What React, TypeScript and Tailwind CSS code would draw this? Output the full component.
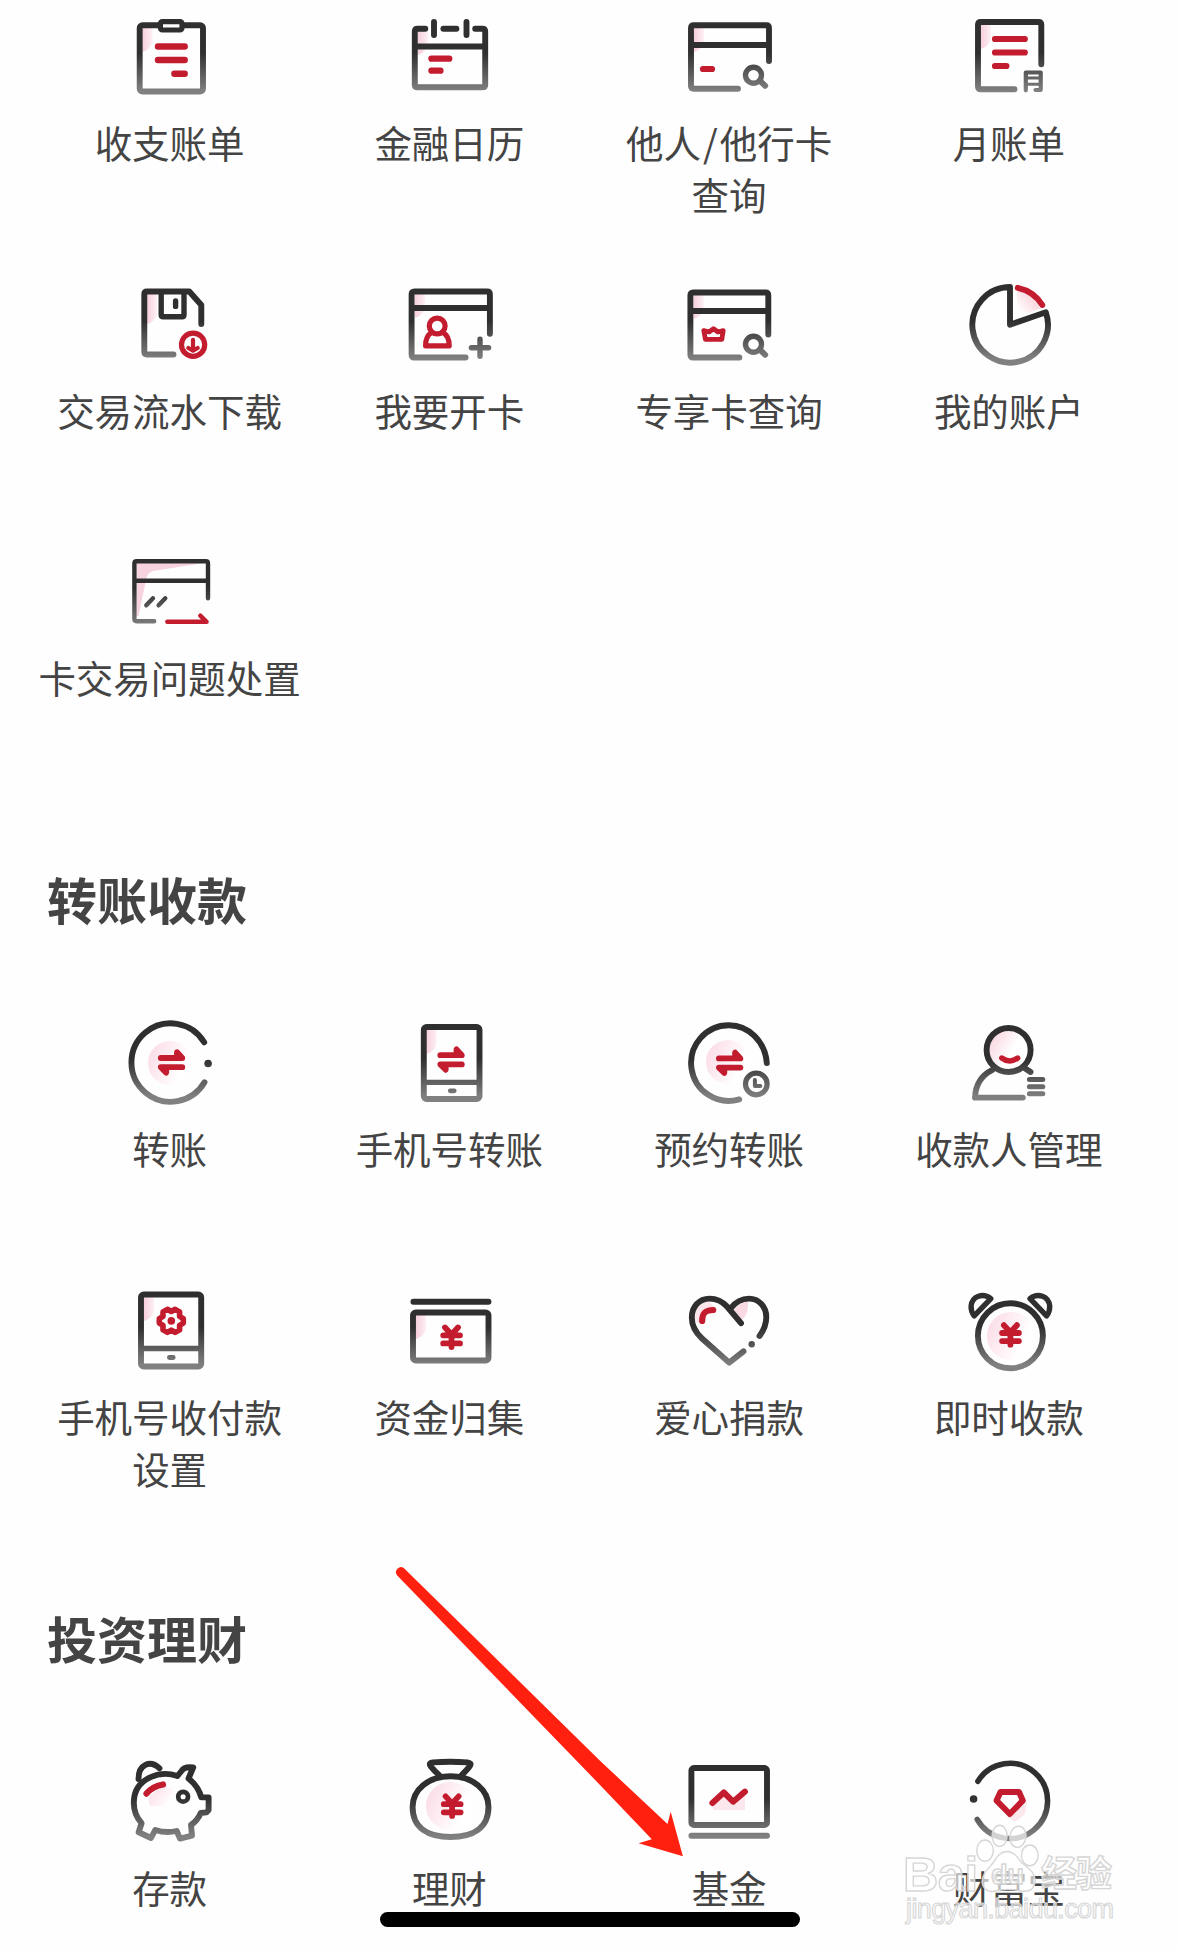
import type { ReactNode } from "react";

const INK = "url(#ink)";
const RED = "#c41c2f";

const Icon = ({ children }: { children: ReactNode }) => (
  <svg
    viewBox="0 0 90 90"
    className="h-[90px] w-[90px] shrink-0 overflow-visible"
    fill="none"
    stroke={INK}
    strokeWidth={5.9}
    strokeLinecap="round"
    strokeLinejoin="round"
  >
    {children}
  </svg>
);

// soft pink shade in the top left corner of the boxed icons
const Blush = ({ x, y, h = 24 }: { x: number; y: number; h?: number }) => (
  <path
    d={`M${x} ${y}h10v${h - 9}q-3 7-10 9z`}
    fill="url(#blush)"
    stroke="none"
  />
);

const Glow = ({ cx, cy, r = 22 }: { cx: number; cy: number; r?: number }) => (
  <circle cx={cx} cy={cy} r={r} fill="url(#glow)" stroke="none" />
);

const Swap = ({ x = 0, y = 0 }: { x?: number; y?: number }) => (
  <g transform={`translate(${x} ${y})`} stroke={RED} fill={RED} strokeWidth={5.8}>
    <path d="M34.8 41H56.3L51 35.2V41" />
    <path d="M56.3 50.2H34.8L40.2 55.6V50.2" />
  </g>
);

const Yen = ({ x = 0, y = 0 }: { x?: number; y?: number }) => (
  <g transform={`translate(${x} ${y})`} stroke={RED} strokeWidth={5.8}>
    <path d="M39 42.5L45.5 49.5L52 42.5M37.2 50.3H54M37.2 58.4H54M45.5 49.5V62" />
  </g>
);

const Magnifier = ({ y = 0 }: { y?: number }) => (
  <g transform={`translate(0 ${y})`}>
    <circle cx="68.5" cy="64.2" r="8" strokeWidth="5.4" />
    <path d="M75 69.8L80.2 74.8" />
  </g>
);

const icons = {
  bill: (
    <Icon>
      <Blush x={16.5} y={17} />
      <rect x="13.7" y="14.3" width="63.3" height="66.2" rx="2.8" />
      <rect x="34.4" y="10.6" width="21.6" height="8.4" rx="2" fill="#fff" strokeWidth="5.2" />
      <path d="M32 35.5H58.7M32 49H58.7M48.4 62.7H58.7" stroke={RED} strokeWidth="6.4" />
    </Icon>
  ),
  calendar: (
    <Icon>
      <Blush x={12} y={20} />
      <path d="M19.3 17.7H11.5Q8.8 17.7 8.8 20.5V74Q8.8 76.3 11.5 76.3H76.5Q79.2 76.3 79.2 74V20.5Q79.2 17.7 76.5 17.7H69.2M37.4 17.7H50.4M28 11V24M60.5 11V24" />
      <path d="M9 35.4H79" strokeWidth="6" />
      <path d="M25.4 47.7H43.3M25.4 59.7H34.5" stroke={RED} strokeWidth="6.2" />
    </Icon>
  ),
  cardSearch: (
    <Icon>
      <Blush x={9} y={17} />
      <path d="M84 50V17Q84 14.3 81.3 14.3H8.8Q6 14.3 6 17V75Q6 77.7 8.8 77.7H53M6 34H84" />
      <path d="M18 58H27" stroke={RED} strokeWidth="6.2" />
      <Magnifier />
    </Icon>
  ),
  monthBill: (
    <Icon>
      <Blush x={16} y={14} />
      <path d="M76.3 53.3V13.8Q76.3 11 73.5 11H15.8Q13 11 13 13.8V75.5Q13 78.3 15.8 78.3H49.5" />
      <path d="M30 28H59.8M30 41.5H59.8M30 55H41.4" stroke={RED} strokeWidth="6.2" />
      <path d="M60.8 79.3V61.5H75.7V79H70.5" strokeWidth="4.2" />
      <path d="M61 67H75M61 73.2H75" strokeWidth="3" />
    </Icon>
  ),
  floppy: (
    <Icon>
      <Blush x={21} y={15} h={30} />
      <path d="M75.3 45V26L63.3 12.5H21Q18.3 12.5 18.3 15.2V72.8Q18.3 75.5 21 75.5H47.5" />
      <path d="M35.2 13V35.8Q35.2 37.8 37.2 37.8H56Q58 37.8 58 35.8V13M49.6 22V27.4" strokeWidth="5.4" />
      <circle cx="67.1" cy="65.7" r="11.6" stroke={RED} strokeWidth="5.2" />
      <path d="M67 60.8V70.5M62.3 69L67 71.6L71.7 69" stroke={RED} strokeWidth="4.2" />
    </Icon>
  ),
  openCard: (
    <Icon>
      <Blush x={9} y={15} />
      <path d="M83.9 54.8V15.3Q83.9 12.5 81.1 12.5H8.4Q5.6 12.5 5.6 15.3V75.7Q5.6 78.5 8.4 78.5H59.6M5.6 29H83.9" />
      <circle cx="31.2" cy="47" r="7.9" stroke={RED} strokeWidth="5.2" />
      <path d="M25.8 53.5C21 56 19.6 61 19.6 66.8H43.2C43.2 61 41.6 56 36.8 53.5" stroke={RED} strokeWidth="5.2" />
      <path d="M65.4 68.8H82.6M74 60.3V77.2" strokeWidth="5.4" />
    </Icon>
  ),
  exclusiveCard: (
    <Icon>
      <Blush x={8.6} y={16} />
      <path d="M83.3 55.5V16.3Q83.3 13.5 80.5 13.5H8.2Q5.4 13.5 5.4 16.3V75.7Q5.4 78.5 8.2 78.5H54.4M5.4 32H83.3" />
      <path d="M18.8 51.6L24 53L28.5 49.8L33 53L38.2 51.6L36.8 60.4H20.4Z" stroke={RED} strokeWidth="4.8" />
      <Magnifier y={1} />
    </Icon>
  ),
  pie: (
    <Icon>
      <path d="M52 38V12Q68 14 75 29.5Z" fill="url(#wedge)" stroke="none" />
      <path d="M45 45.7V8A37.8 37.8 0 1 0 80.8 33.3Z" />
      <path d="M52.8 8.8Q69 12.3 77.3 26" stroke={RED} />
    </Icon>
  ),
  cardIssue: (
    <Icon>
      <path d="M10.5 17H78L27 25Q21 26.5 20 34L12.5 70H10.5Z" fill="#f6d3de" stroke="none" />
      <g strokeWidth="4.4">
        <path d="M82 52.3V17.4Q82 15.2 79.8 15.2H10.6Q8.4 15.2 8.4 17.4V73Q8.4 75.2 10.6 75.2H28.2M8.4 34.8H82M27 52.3L20.3 59.3M39.3 52.3L32.6 59.3" />
        <path d="M41.3 75.8H80.6L74.3 69.7" stroke={RED} />
      </g>
    </Icon>
  ),
  transfer: (
    <Icon>
      <Glow cx={44} cy={46} />
      <path d="M78.2 25.3A39.2 39.2 0 1 0 78.5 65.3" />
      <circle cx="82.1" cy="46.5" r="3.8" fill={INK} stroke="none" />
      <Swap />
    </Icon>
  ),
  phoneTransfer: (
    <Icon>
      <Blush x={20.5} y={13} />
      <rect x="17.8" y="10" width="55.7" height="72" rx="2.8" />
      <path d="M18 65.4H73" strokeWidth="5.4" />
      <path d="M44.3 73.8H48.2" strokeWidth="4.8" />
      <Swap x={-0.5} y={-2.8} />
    </Icon>
  ),
  scheduled: (
    <Icon>
      <Glow cx={43} cy={45} />
      <path d="M81.8 46A38 41 0 0 0 44 8.3A37.6 37.8 0 1 0 54.2 82.4" />
      <Swap x={-0.9} y={0.4} />
      <circle cx="71.3" cy="67" r="10.8" strokeWidth="5.2" />
      <path d="M69.9 63V69H75.3" strokeWidth="4" />
    </Icon>
  ),
  payee: (
    <Icon>
      <circle cx="43.6" cy="33" r="22" fill="url(#face)" />
      <path d="M36.8 41Q44.7 47 52.7 41" stroke={RED} strokeWidth="5.4" />
      <path d="M27.5 52.8C17 58 10.5 67 10 80.6H57.8M59.5 51L65.5 55" />
      <path d="M64.4 62.4H77.8M64.4 69.7H77.8M64.4 76.8H77.8" strokeWidth="5" />
    </Icon>
  ),
  phoneSettings: (
    <Icon>
      <Blush x={18} y={12} />
      <rect x="15" y="9.5" width="60.2" height="72" rx="2.8" />
      <path d="M15.5 63.5H75" strokeWidth="5.4" />
      <path d="M43.4 72.5H47.2" strokeWidth="4.8" />
      <path
        d="M41.4 24.3L45.3 26.5L49.2 24.3L53.6 26.9V31.4L57.3 33.7V38.1L53.6 40.4V44.9L49.2 47.4L45.3 45.1L41.4 47.4L37 44.9V40.4L33.3 38.1V33.7L37 31.4V26.9Z"
        stroke={RED}
        strokeWidth="5.6"
      />
      <circle cx="45.3" cy="35.9" r="3.8" fill={RED} stroke="none" />
    </Icon>
  ),
  collect: (
    <Icon>
      <Blush x={10} y={30} />
      <path d="M7.4 16.8H82.5" />
      <rect x="7" y="27.5" width="75.5" height="48" rx="2.8" />
      <Yen />
    </Icon>
  ),
  heart: (
    <Icon>
      <path d="M49 25Q55 17 63 16.5Q64 28 57 35Z" fill="#f8d9e2" stroke="none" />
      <path d="M10 33Q10 17 24 16.5L29 22Q18 22 17 37L12 38Z" fill="#fbe4ea" stroke="none" />
      <path d="M56 38.2L42 21.5C37 16 31 13.6 24.5 13.6C14 13.6 6.8 22 6.8 32.5C6.8 41 10.5 47.5 17 53.5L44.2 77.6L58.5 66.4" />
      <path d="M46 23C51 16.5 57 13.6 64 13.6C74 13.6 81.3 22 81.3 32C81.3 39 79 45 74.5 51" />
      <circle cx="66.7" cy="59.3" r="3.2" fill={INK} stroke="none" />
      <path d="M17.2 36C17.2 28 20.2 25 28.2 25" stroke={RED} strokeWidth="6.2" />
    </Icon>
  ),
  alarm: (
    <Icon>
      <Glow cx={46} cy={51} r={24} />
      <circle cx="45.4" cy="50.8" r="32.5" />
      <path d="M25.8 13.6C18 7.6 7.2 11 6.1 21Q5.8 26.5 9.2 30.9Z" strokeWidth="5.4" />
      <path d="M65 13.6C72.8 7.6 83.6 11 84.7 21Q85 26.5 81.6 30.9Z" strokeWidth="5.4" />
      <Yen x={-0.1} y={-2.3} />
    </Icon>
  ),
  pig: (
    <Icon>
      <path d="M22 42L37 29L55 38L42 50H24Z" fill="url(#glow)" stroke="none" />
      <path d="M12.5 23C12.5 8.5 24 3.5 33.5 12.3" />
      <path d="M51.4 20C34 14 7.8 22 7.8 47C7.8 55 10.5 61.5 15.6 67.3L12.6 76.3L25 82L29.2 74Q40 77.5 50.7 75L54 82.6L66 79.6L65 69Q71.5 64.5 74.8 57L80.5 56.4L82.6 54V41.4H75.2Q72.5 30.5 62.5 22.5L67.2 11.5Q58 10.5 55.5 15L51.4 20" />
      <circle cx="57.1" cy="40.7" r="4.9" strokeWidth="4.7" />
      <path d="M20.5 37.6Q27 30 37 28.5" stroke={RED} strokeWidth="6.2" />
    </Icon>
  ),
  bag: (
    <Icon>
      <Glow cx={44} cy={50} r={24} />
      <path d="M34 20C30 16 26 12.5 24.2 9.4Q22.8 6.8 27 6.4Q44 5 61.5 6.4Q65.6 6.8 64.2 9.4C62 13 58 16.5 55 20" />
      <path d="M44.6 20.3C67 20.3 82.5 34 82.5 51C82.5 72 67 81 44.6 81C22 81 6.6 72 6.6 51C6.6 34 22 20.3 44.6 20.3Z" />
      <Yen x={0.6} y={-2.1} />
    </Icon>
  ),
  fund: (
    <Icon>
      <path d="M28 50L39 40L48 48L60 39V54H28Z" fill="#fbe7ec" stroke="none" />
      <rect x="6.4" y="12" width="75.6" height="57" rx="2.5" />
      <path d="M6.4 79.7H82" />
      <path d="M27.4 47L38.8 36.5L48.1 45.7L59.9 35.6" stroke={RED} strokeWidth="6" />
    </Icon>
  ),
  treasure: (
    <Icon>
      <path d="M44 62L62 46L60 58L50 66Z" fill="#fbe7ec" stroke="none" />
      <path d="M12.9 25.3A37.6 37.6 0 1 1 12.2 63.3" strokeWidth="5.5" />
      <circle cx="8.6" cy="43" r="3.8" fill={INK} stroke="none" />
      <path d="M35.5 36H54L57.8 44.6L44.8 58L31.6 44.6Z" stroke={RED} strokeWidth="6" />
    </Icon>
  ),
};

type Item = { icon: keyof typeof icons; label: ReactNode };

const accountItems: Item[] = [
  { icon: "bill", label: "收支账单" },
  { icon: "calendar", label: "金融日历" },
  {
    icon: "cardSearch",
    label: (
      <>
        他人<span className="px-[2px]">/</span>他行卡
        <br />
        查询
      </>
    ),
  },
  { icon: "monthBill", label: "月账单" },
  { icon: "floppy", label: "交易流水下载" },
  { icon: "openCard", label: "我要开卡" },
  { icon: "exclusiveCard", label: "专享卡查询" },
  { icon: "pie", label: "我的账户" },
  { icon: "cardIssue", label: "卡交易问题处置" },
];

const transferItems: Item[] = [
  { icon: "transfer", label: "转账" },
  { icon: "phoneTransfer", label: "手机号转账" },
  { icon: "scheduled", label: "预约转账" },
  { icon: "payee", label: "收款人管理" },
  {
    icon: "phoneSettings",
    label: (
      <>
        手机号收付款
        <br />
        设置
      </>
    ),
  },
  { icon: "collect", label: "资金归集" },
  { icon: "heart", label: "爱心捐款" },
  { icon: "alarm", label: "即时收款" },
];

const investItems: Item[] = [
  { icon: "pig", label: "存款" },
  { icon: "bag", label: "理财" },
  { icon: "fund", label: "基金" },
  { icon: "treasure", label: "财富宝" },
];

const ItemGrid = ({ items }: { items: Item[] }) => (
  <div className="grid auto-rows-[267.6px] grid-cols-4 pl-[31px] pr-[29px]">
    {items.map((item) => (
      <div key={item.icon} className="flex flex-col items-center gap-[15px]">
        {icons[item.icon]}
        <span className="whitespace-nowrap pr-[2.5px] text-center text-[37.5px] leading-[52.3px]">
          {item.label}
        </span>
      </div>
    ))}
  </div>
);

const SectionTitle = ({ children }: { children: ReactNode }) => (
  <h2 className="mb-[83px] mt-[48.5px] pl-[47px] text-[50px] font-bold leading-[72px]">
    {children}
  </h2>
);

const Gradients = () => (
  <svg className="absolute h-0 w-0">
    <defs>
      <linearGradient id="ink" gradientUnits="userSpaceOnUse" x1="0" y1="42" x2="0" y2="80">
        <stop offset="0" stopColor="#2f2f2f" />
        <stop offset="1" stopColor="#808080" />
      </linearGradient>
      <linearGradient id="blush">
        <stop offset="0" stopColor="#f7cfdc" />
        <stop offset="1" stopColor="#fdf0f4" />
      </linearGradient>
      <linearGradient id="glow" x1="0" y1="0.2" x2="0.9" y2="0.6">
        <stop offset="0" stopColor="#fbdbe5" />
        <stop offset="0.9" stopColor="#fff" />
      </linearGradient>
      <linearGradient id="wedge" x1="1" y1="0" x2="0.1" y2="0.8">
        <stop offset="0" stopColor="#f6c3cf" />
        <stop offset="1" stopColor="#fff" />
      </linearGradient>
      <linearGradient id="face" x1="0" y1="0.2" x2="0.9" y2="0.7">
        <stop offset="0" stopColor="#f8cfdb" />
        <stop offset="0.65" stopColor="#fff" />
      </linearGradient>
    </defs>
  </svg>
);

const Pointer = () => (
  <svg
    viewBox="0 0 300 300"
    className="absolute left-[390px] top-[1560px] h-[300px] w-[300px]"
    fill="#ff2010"
  >
    <path d="M14 8.2L210 200.7L277.5 264L280.7 251.7L292.9 296.3L248.6 283.3L261.8 279.3L210 225L7 15.2A5 5 0 0 1 14 8.2Z" />
  </svg>
);

const Watermark = () => (
  <svg
    viewBox="0 0 230 110"
    className="absolute left-[900px] top-[1820px] h-[110px] w-[230px]"
    fill="#fff"
    fillOpacity="0.65"
    stroke="#d6d6d6"
    strokeWidth="1.4"
  >
    <ellipse cx="99.6" cy="15.8" rx="7.5" ry="10.6" />
    <ellipse cx="117.9" cy="16.8" rx="8" ry="10.6" transform="rotate(8 117.9 16.8)" />
    <ellipse cx="85" cy="30.6" rx="8.3" ry="10.6" />
    <ellipse cx="129.8" cy="35.4" rx="8.3" ry="10.4" />
    <path d="M107 31.5C114 31.5 118 38 122 43C129 49 136 53 135 62C134 71 127 72 121 71C112 69 103 69 95 71C88 73 83 69 82 62C82 54 88 49 93 43C97 37 100 31.5 107 31.5Z" />
    <g fontWeight="bold" className="font-['Liberation_Sans']">
      <text x="3" y="70.5" fontSize="49" textLength="75">Bai</text>
      <text x="91" y="63.5" fontSize="27" textLength="33">du</text>
    </g>
    <text x="141" y="67" fontSize="36" fontWeight="bold" textLength="71" className="font-['Noto_Sans_CJK_SC']">
      经验
    </text>
    <text x="6" y="97.5" fontSize="27" textLength="208" strokeWidth="1.1" className="font-['Liberation_Sans']">
      jingyan.baidu.com
    </text>
  </svg>
);

export default function App() {
  return (
    <div className="relative h-[1951px] w-[1179px] overflow-hidden bg-[#fefefe] pt-[11px] font-['Noto_Sans_CJK_SC',sans-serif] text-[#444]">
      <Gradients />
      <ItemGrid items={accountItems} />
      <SectionTitle>转账收款</SectionTitle>
      <ItemGrid items={transferItems} />
      <SectionTitle>投资理财</SectionTitle>
      <ItemGrid items={investItems} />
      <Pointer />
      <Watermark />
      <div className="absolute left-[380px] top-[1912px] h-[15px] w-[420px] rounded-full bg-black" />
    </div>
  );
}
